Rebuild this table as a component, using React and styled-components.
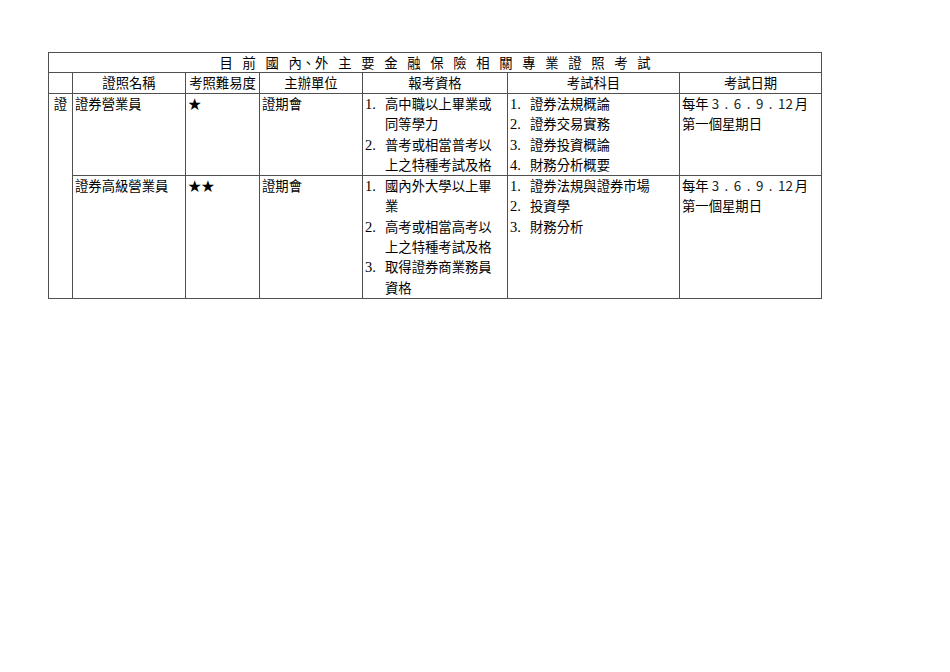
import styled, { createGlobalStyle } from "styled-components";

const GlobalStyle = createGlobalStyle`
  html, body {
    margin: 0;
    padding: 0;
    background: #fff;
  }
  body {
    font-family: "Noto Sans CJK TC", "Noto Sans", sans-serif;
    font-size: 13.33px;
    color: #000;
  }
`;

const Page = styled.div`
  padding: 52px 0 0 48px;
`;

const Table = styled.table`
  border-collapse: collapse;
  table-layout: fixed;
  width: 773px;
  line-height: 20.3px;
`;

const Cell = styled.td`
  border: 1px solid #505050;
  padding: ${(p) => p.$pad || "0 2px"};
  vertical-align: top;
  text-align: ${(p) => (p.$center ? "center" : "left")};
  white-space: nowrap;
`;

const HeadCell = styled(Cell).attrs({ as: "th" })`
  font-weight: normal;
  text-align: center;
  vertical-align: middle;
  height: ${(p) => p.$h || "20px"};
  line-height: ${(p) => p.$h || "20px"};
`;

const TitleRow = styled.div`
  display: flex;
  justify-content: center;
  gap: 9.7px;
`;

const List = styled.div`
  display: flex;
  flex-direction: column;
`;

const Item = styled.div`
  display: flex;
  white-space: normal;
`;

const Num = styled.span`
  flex: 0 0 20px;
  font-family: "Liberation Serif", serif;
  font-size: 14.5px;
`;

const ItemText = styled.span`
  width: ${(p) => p.$w || "110px"};
  word-break: break-all;
`;

const Digit = styled.span`
  color: #222;
`;

const Dot = styled.span`
  padding: 0 5.5px;
`;

const title = ["目", "前", "國", "內、外", "主", "要", "金", "融", "保", "險", "相", "關", "專", "業", "證", "照", "考", "試"];

const months = ["3", "6", "9", "12"];

const rows = [
  {
    name: "證券營業員",
    level: "★",
    org: "證期會",
    reqs: ["高中職以上畢業或同等學力", "普考或相當普考以上之特種考試及格"],
    subjects: ["證券法規概論", "證券交易實務", "證券投資概論", "財務分析概要"],
  },
  {
    name: "證券高級營業員",
    level: "★★",
    org: "證期會",
    reqs: ["國內外大學以上畢業", "高考或相當高考以上之特種考試及格", "取得證券商業務員資格"],
    subjects: ["證券法規與證券市場", "投資學", "財務分析"],
  },
];

const NumList = ({ items, w }) => (
  <List>
    {items.map((t, i) => (
      <Item key={i}>
        <Num>{i + 1}.</Num>
        <ItemText $w={w}>{t}</ItemText>
      </Item>
    ))}
  </List>
);

const ExamDate = () => (
  <>
    每年
    <span style={{ marginLeft: 3 }} />
    {months.map((m, i) => (
      <span key={m}>
        <Digit>{m}</Digit>
        {i < months.length - 1 && <Dot>.</Dot>}
      </span>
    ))}
    <span style={{ marginLeft: 2 }} />月
    <br />
    第一個星期日
  </>
);

export default function App() {
  return (
    <Page>
      <GlobalStyle />
      <Table>
        <colgroup>
          <col style={{ width: 24 }} />
          <col style={{ width: 113 }} />
          <col style={{ width: 74 }} />
          <col style={{ width: 103 }} />
          <col style={{ width: 145 }} />
          <col style={{ width: 172 }} />
          <col style={{ width: 142 }} />
        </colgroup>
        <thead>
          <tr>
            <HeadCell colSpan={7} $h="19px">
              <TitleRow>
                {title.map((c, i) => (
                  <span key={i}>{c}</span>
                ))}
              </TitleRow>
            </HeadCell>
          </tr>
          <tr>
            <HeadCell />
            <HeadCell>證照名稱</HeadCell>
            <HeadCell $pad="0">考照難易度</HeadCell>
            <HeadCell>主辦單位</HeadCell>
            <HeadCell>報考資格</HeadCell>
            <HeadCell>考試科目</HeadCell>
            <HeadCell>考試日期</HeadCell>
          </tr>
        </thead>
        <tbody>
          {rows.map((r, i) => (
            <tr key={i}>
              {i === 0 && (
                <Cell rowSpan={rows.length} $center $pad="0">
                  證
                </Cell>
              )}
              <Cell>{r.name}</Cell>
              <Cell>{r.level}</Cell>
              <Cell>{r.org}</Cell>
              <Cell>
                <NumList items={r.reqs} />
              </Cell>
              <Cell>
                <NumList items={r.subjects} w="140px" />
              </Cell>
              <Cell>
                <ExamDate />
              </Cell>
            </tr>
          ))}
        </tbody>
      </Table>
    </Page>
  );
}
